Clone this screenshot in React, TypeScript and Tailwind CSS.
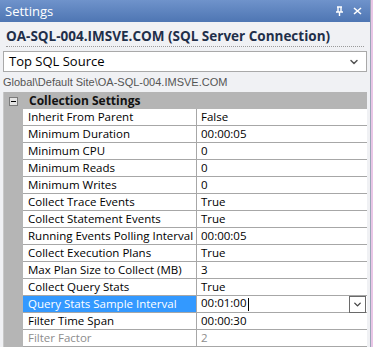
import { ChevronDown } from 'lucide-react';

const rows: [string, string][] = [
  ['Inherit From Parent', 'False'],
  ['Minimum Duration', '00:00:05'],
  ['Minimum CPU', '0'],
  ['Minimum Reads', '0'],
  ['Minimum Writes', '0'],
  ['Collect Trace Events', 'True'],
  ['Collect Statement Events', 'True'],
  ['Running Events Polling Interval', '00:00:05'],
  ['Collect Execution Plans', 'True'],
  ['Max Plan Size to Collect (MB)', '3'],
  ['Collect Query Stats', 'True'],
  ['Query Stats Sample Interval', '00:01:00'],
  ['Filter Time Span', '00:00:30'],
  ['Filter Factor', '2'],
];

export default function App() {
  return (
    <div className="flex w-[373px] h-[347px] overflow-hidden bg-[#e9c6e6] font-['Open_Sans',sans-serif]">
      <div className="flex flex-col w-[371px] h-full bg-[#f0f1f4] border-r border-[#9aa6b8]">
        {/* Title bar */}
        <div className="flex items-center justify-between h-[22px] px-[5px] bg-gradient-to-b from-[#6f93cb] to-[#4e76b3] text-white">
          <span className="text-[13px] leading-none">Settings</span>
          <div className="flex items-center gap-[9px] pr-[3px]">
            <svg width="9" height="10" viewBox="0 0 9 10" fill="none" stroke="white" strokeWidth="1.4">
              <path d="M2 1h5M3 1v5M6 1v5M1 6h7M4.5 6v4" />
            </svg>
            <svg width="9" height="8" viewBox="0 0 9 8" fill="none" stroke="white" strokeWidth="1.6">
              <path d="M1 1l7 6M8 1l-7 6" />
            </svg>
          </div>
        </div>

        {/* Header */}
        <div className="px-[6px] pt-[5px]">
          <div className="text-[13.5px] font-bold text-[#1f2f4a] leading-[18px] pb-[1px] border-b border-dotted border-[#9a9a9a]">
            OA-SQL-004.IMSVE.COM (SQL Server Connection)
          </div>
        </div>
        <div className="mx-[3px] mt-[4px] h-[21px] flex items-center justify-between bg-white border border-[#a9a9a9] pl-[5px] pr-[6px]">
          <span className="text-[13px] text-black">Top SQL Source</span>
          <ChevronDown size={12} strokeWidth={3} className="text-[#555]" />
        </div>
        <div className="px-[3px] h-[20px] flex items-center font-['Liberation_Sans',sans-serif] text-[11px] text-[#555]">
          Global\Default Site\OA-SQL-004.IMSVE.COM
        </div>

        {/* Property grid */}
        <div className="mx-[3px] flex-1 flex bg-white border-l border-[#c8c8c8] text-[11.5px] leading-none">
          <div className="w-[19px] bg-[#b5b5b5] flex justify-center pt-[5px]">
            <div className="w-[9px] h-[9px] border border-[#7b7b7b] bg-[#e4e4e4] flex items-center justify-center">
              <div className="w-[5px] h-[1px] bg-black" />
            </div>
          </div>
          <div className="flex-1 flex flex-col">
            <div className="h-[17px] bg-[#b5b5b5] flex items-center pl-[6px] font-bold text-[12px] text-[#111]">
              Collection Settings
            </div>
            {rows.map(([name, value]) => {
              const selected = name === 'Query Stats Sample Interval';
              const disabled = name === 'Filter Factor';
              return (
                <div key={name} className="h-[17px] flex border-b border-[#a7a7a7]">
                  <div
                    className={`w-[174px] shrink-0 flex items-center pl-[5px] border-r border-[#a7a7a7] whitespace-nowrap ${
                      selected ? 'bg-[#3399ff] text-white' : disabled ? 'text-[#8d8d8d]' : 'text-black'
                    }`}
                  >
                    {name}
                  </div>
                  <div className={`flex-1 flex items-center justify-between pl-[4px] ${disabled ? 'text-[#8d8d8d]' : 'text-black'}`}>
                    <span>
                      {value}
                      {selected && <span className="inline-block w-[1px] h-[13px] bg-black align-middle ml-[1px]" />}
                    </span>
                    {selected && (
                      <div className="w-[17px] h-[17px] border border-[#6a6a6a] bg-white flex items-center justify-center mr-[1px]">
                        <ChevronDown size={11} strokeWidth={3} className="text-[#444]" />
                      </div>
                    )}
                  </div>
                </div>
              );
            })}
          </div>
        </div>
      </div>
    </div>
  );
}
